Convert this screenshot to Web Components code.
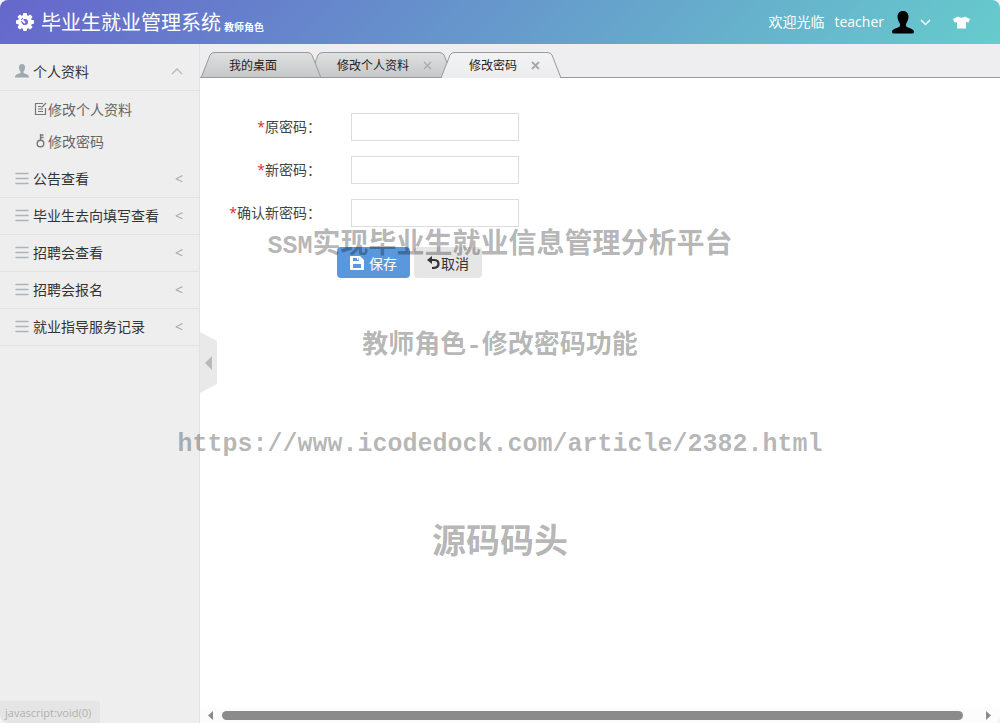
<!DOCTYPE html>
<html lang="zh-CN">
<head>
<meta charset="utf-8">
<meta name="viewport" content="width=device-width, initial-scale=1">
<title>毕业生就业管理系统</title>
<style>
  body { margin: 0; background: #f4f4f6; font-family: "Open Sans", "Noto Sans CJK SC", sans-serif; font-size: 14px; color: #333; }
</style>
</head>
<body>
<admin-app>
  <app-header slot="header" name="毕业生就业管理系统" role-name="教师角色" user="teacher"></app-header>
  <side-menu slot="side">
    <menu-group label="个人资料" icon="user" open>
      <menu-link icon="edit">修改个人资料</menu-link>
      <menu-link icon="key">修改密码</menu-link>
    </menu-group>
    <menu-group label="公告查看"></menu-group>
    <menu-group label="毕业生去向填写查看"></menu-group>
    <menu-group label="招聘会查看"></menu-group>
    <menu-group label="招聘会报名"></menu-group>
    <menu-group label="就业指导服务记录"></menu-group>
  </side-menu>
  <tab-strip>
    <page-tab fixed>我的桌面</page-tab>
    <page-tab>修改个人资料</page-tab>
    <page-tab active>修改密码</page-tab>
  </tab-strip>
  <password-form>
    <form-field label="原密码："></form-field>
    <form-field label="新密码："></form-field>
    <form-field label="确认新密码："></form-field>
  </password-form>
  <scroll-track></scroll-track>
  <status-tip slot="overlay">javascript:void(0)</status-tip>
  <water-mark slot="overlay"></water-mark>
</admin-app>

<script>
const define = (name, render) => customElements.define(name, class extends HTMLElement {
  connectedCallback() {
    if (this.shadowRoot) return;
    this.attachShadow({ mode: 'open' }).innerHTML = render(this);
  }
});

define('admin-app', () => `
  <style>
    :host { display: flex; flex-direction: column; position: relative; min-height: 100vh; border-radius: 8px; overflow: hidden; background: #fff; }
    .body { display: flex; flex: 1; }
    aside { width: 199px; flex: none; background: #eee; border-right: 1px solid #e2e2e2; }
    main { flex: 1; min-width: 0; display: flex; flex-direction: column; }
    .fold { position: absolute; left: 200px; top: 0; bottom: 0; margin: auto 0; width: 17px; height: 62px; padding: 0; border: 0; background: none; display: block; }
    .fold svg { display: block; }
  </style>
  <slot name="header"></slot>
  <div class="body">
    <aside><slot name="side"></slot></aside>
    <main><slot></slot></main>
  </div>
  <button class="fold" aria-label="收起菜单"><svg width="17" height="62"><path d="M0 1L17 10V53L0 62Z" fill="#e9e9e9"/><path d="M5 32L12 25V39Z" fill="#b9b9b9"/></svg></button>
  <slot name="overlay"></slot>`);

define('app-header', el => `
  <style>
    :host { display: flex; align-items: center; height: 44px; padding: 0 30px 0 15px; color: #fff; background: linear-gradient(135deg, #66c, #6cc); }
    h1 { display: flex; align-items: center; margin: 0; padding-top: 2px; font-size: 20px; font-weight: 400; line-height: 30px; }
    h1 svg { margin: 0 6px 2px 0; }
    small { font-size: 10px; font-weight: 700; line-height: 16px; margin: 8px 0 0 3px; }
    nav { display: flex; align-items: center; margin-left: auto; line-height: 20px; }
    nav span { margin-right: 10px; }
    button { display: flex; align-items: center; padding: 0; border: 0; background: none; color: inherit; font: inherit; }
    .user svg:first-of-type { margin: 0 6px 0 8px; }
    .skin { margin-left: 22px; }
  </style>
  <h1><svg width="20" height="20" viewBox="0 0 20 20"><g fill="#fff"><path fill-rule="evenodd" d="M10 3a7 7 0 1 1 0 14a7 7 0 0 1 0-14zM10 7a3 3 0 1 0 0 6a3 3 0 0 0 0-6z"/><g><rect x="8" y="1" width="4" height="4" rx="1"/><rect x="8" y="15" width="4" height="4" rx="1"/></g><g transform="rotate(45 10 10)"><rect x="8" y="1" width="4" height="4" rx="1"/><rect x="8" y="15" width="4" height="4" rx="1"/></g><g transform="rotate(90 10 10)"><rect x="8" y="1" width="4" height="4" rx="1"/><rect x="8" y="15" width="4" height="4" rx="1"/></g><g transform="rotate(135 10 10)"><rect x="8" y="1" width="4" height="4" rx="1"/><rect x="8" y="15" width="4" height="4" rx="1"/></g></g><path d="M6 7L10 11" stroke="#fff" stroke-width="2"/><path d="M6 9L9 13M8 6L6 8" stroke="#66c" stroke-width="1"/></svg>${el.getAttribute('name')}<small>${el.getAttribute('role-name')}</small></h1>
  <nav><span>欢迎光临</span>
    <button class="user">${el.getAttribute('user')}<svg width="22" height="24" viewBox="0 0 22 24"><path d="M11 1C14 1 16.500 3 16.500 6.500C16.500 10 15 12 14 14V16C15 18 21 18.500 22 21V22Q22 23.500 20 23.500H2Q0 23.500 0 22V21C1 18.500 7 18 8 16V14C7 12 5.500 10 5.500 6.500C5.500 3 8 1 11 1Z" fill="#000"/></svg><svg width="11" height="7" viewBox="0 0 11 7"><path d="M1 1L5.500 5.500L10 1" fill="none" stroke="#fff" stroke-width="1.500"/></svg></button>
    <button class="skin" aria-label="换肤"><svg width="17" height="13" viewBox="0 0 17 13"><path d="M5 .5Q8.500 3 12 .5L17 3L15.500 6.500L13 6V12.500H4V6L1.500 6.500L0 3Z" fill="#fff"/></svg></button>
  </nav>`);

define('side-menu', () => `
  <style>:host { display: block; padding-top: 10px; }</style>
  <slot></slot>`);

const groupIcons = {
  user: '<svg width="14" height="14" viewBox="0 0 14 14"><path d="M7 0C9 0 10 1.500 10 3.500C10 5.500 9.500 6.500 8.500 7.500V9C9.500 10 14 9.500 14 13.500H0C0 9.500 4.500 10 5.500 9V7.500C4.500 6.500 4 5.500 4 3.500C4 1.500 5 0 7 0Z" fill="#a0a8b0"/></svg>',
  list: '<svg width="14" height="14" viewBox="0 0 14 14"><path d="M1 2.500H13M1 7.500H13M1 12.500H13" stroke="#adb3ba" stroke-width="1.400" stroke-linecap="round"/></svg>'
};
define('menu-group', el => `
  <style>
    :host { display: block; }
    button { display: flex; align-items: center; box-sizing: border-box; width: 100%; height: 37px; padding: 0 16px 2px 15px; border: 0; border-bottom: 1px solid #e2e2e2; background: none; color: #333; font: inherit; text-align: left; }
    button svg:first-child { margin-right: 4px; }
    .mark { margin-left: auto; color: #a4a8a8; }
    .sub { padding: 2px 0 4px; }
  </style>
  <button aria-expanded="${el.hasAttribute('open')}">${groupIcons[el.getAttribute('icon') || 'list']}${el.getAttribute('label')}
    ${el.hasAttribute('open') ? '<svg class="mark" width="12" height="8" viewBox="0 0 12 8"><path d="M1 7L6 2L11 7" fill="none" stroke="#b9b9b9" stroke-width="1.300"/></svg>' : '<span class="mark">&lt;</span>'}
  </button>
  ${el.hasAttribute('open') ? '<div class="sub"><slot></slot></div>' : ''}`);

const linkIcons = {
  edit: '<path d="M9 1.500H1.500V12.500H11.500V6M4 4.500H7M4 7H9M4 9.500H9M7.500 5.500L12 1" fill="none" stroke="#777" stroke-width="1.200"/>',
  key: '<circle cx="6.500" cy="9.500" r="3.300" fill="none" stroke="#777" stroke-width="1.400"/><path d="M6.500 6.500V0M6.500 1H9.500M6.500 3.500H9.500" fill="none" stroke="#777" stroke-width="1.300"/>'
};
define('menu-link', el => `
  <style>
    :host { display: block; }
    a { display: flex; align-items: center; height: 32px; padding-left: 34px; color: #666; text-decoration: none; }
    svg { margin-right: 1px; }
  </style>
  <a href="#"><svg width="13" height="14" viewBox="0 0 13 14">${linkIcons[el.getAttribute('icon')]}</svg><slot></slot></a>`);

define('tab-strip', () => `
  <style>:host { display: flex; align-items: flex-end; box-sizing: border-box; height: 34px; padding-left: 1px; background: linear-gradient(#999, #999) bottom / 100% 1px no-repeat #eeeef0; isolation: isolate; }</style>
  <slot></slot>`);

define('page-tab', el => {
  const active = el.hasAttribute('active');
  const paint = active ? ['#f2f3f5', '#ececee'] : ['#dfe1e1', '#c6c7c8'];
  const edge = (name, fill, line) => `<svg class="${name}" width="14" height="26"><defs><linearGradient id="${name}" x2="0" y2="1"><stop stop-color="${paint[0]}"/><stop offset="1" stop-color="${paint[1]}"/></linearGradient></defs><path d="${fill}" fill="url(#${name})"/><path d="${line}" fill="none" stroke="#999"/></svg>`;
  return `
  <style>
    :host { display: flex; position: relative; z-index: ${active ? 2 : 0}; height: 26px; font-size: 12px; line-height: 25px; margin-right: -12px; }
    :host([fixed]) { z-index: 1; }
    svg { display: block; flex: none; }
    .label { display: flex; box-sizing: border-box; border-top: 1px solid #999; border-bottom: ${active ? '0' : '1px solid #999'}; padding-left: 14px; height: 26px; background: linear-gradient(${paint[0]}, ${paint[1]}); color: #222; white-space: nowrap; }
    .close { display: flex; align-items: center; box-sizing: border-box; width: 30px; height: 24px; padding: 1px 0 0 14px; border: 0; background: none; }
  </style>
  ${edge('left', 'M0 26L9 3Q10 0 14 0V26Z', 'M0 26L9 3Q10 .5 14 .5' + (active ? '' : 'M0 25.500H14'))}
  <span class="label"><slot></slot>${el.hasAttribute('fixed') ? '<span class="close"></span>' : `<button class="close" aria-label="关闭"><svg width="9" height="9"><path d="M1 1L8 8M8 1L1 8" stroke="${active ? '#a3a8ac' : '#a6aaad'}" stroke-width="${active ? 1.8 : 1.2}"/></svg></button>`}</span>
  ${edge('right', 'M14 26L5 3Q4 0 0 0V26Z', 'M14 26L5 3Q4 .5 0 .5' + (active ? '' : 'M0 25.500H14'))}`;
});

define('password-form', () => `
  <style>
    :host { display: block; flex: 1; padding-top: 35px; }
    .fields { display: grid; gap: 15px; }
    .actions { display: flex; gap: 4px; margin: 20px 0 0 137px; }
    button { display: flex; align-items: center; height: 31px; padding: 0 13px; border: 0; border-radius: 4px; font: inherit; }
    .save { gap: 5px; background: #5a98de; color: #fff; }
    .cancel { gap: 1px; background: #e6e6e6; color: #333; }
  </style>
  <form>
    <div class="fields"><slot></slot></div>
    <div class="actions">
      <button type="button" class="save"><svg width="14" height="14" viewBox="0 0 14 14"><path fill-rule="evenodd" d="M1 0H10L14 4V13Q14 14 13 14H1Q0 14 0 13V1Q0 0 1 0ZM3 2V5H9V2ZM3 8V12H11V8Z" fill="#fff"/><path d="M7 2H8.500V4H7Z" fill="#fff"/></svg>保存</button>
      <button type="button" class="cancel"><svg width="13" height="13" viewBox="0 0 13 13"><path d="M3 4H7Q11.500 4 11.500 8Q11.500 12 5 12" fill="none" stroke="#333" stroke-width="2.200"/><path d="M0 4L5 0V8Z" fill="#333"/></svg>取消</button>
    </div>
  </form>`);

define('form-field', el => `
  <style>
    :host { display: grid; grid-template-columns: 121px 168px; column-gap: 30px; align-items: center; }
    label { text-align: right; line-height: 28px; white-space: nowrap; color: #444; }
    b { font-weight: 400; color: #e02b2b; }
    input { box-sizing: border-box; width: 100%; height: 28px; padding: 0 8px; border: 1px solid #ddd; background: #fff; font: inherit; outline: 0; }
  </style>
  <label for="f"><b>*</b>${el.getAttribute('label')}</label><input id="f" type="password">`);

define('scroll-track', () => `
  <style>
    :host { display: flex; align-items: center; height: 15px; padding: 0 9px 0 8px; background: #fcfcfc; }
    i { flex: 1; height: 9px; margin: 0 23px 0 9px; border-radius: 5px; background: #8b8b8b; }
  </style>
  <svg width="5" height="9"><path d="M0 4.500L5 0V9Z" fill="#8b8b8b"/></svg><i></i><svg width="5" height="9"><path d="M5 4.500L0 0V9Z" fill="#8b8b8b"/></svg>`);

define('status-tip', () => `
  <style>:host { position: absolute; left: 0; bottom: 0; box-sizing: border-box; height: 22px; padding: 0 9px 0 5px; border-radius: 0 3px 0 0; background: #e5e5e5; color: #b0b0b0; font-size: 11px; line-height: 23px; }</style>
  <slot></slot>`);

define('water-mark', () => `
  <style>
    :host { position: absolute; inset: 0; display: flex; flex-direction: column; align-items: center; padding-top: 226px; font-family: "Liberation Mono", "Noto Sans CJK SC", monospace; font-weight: 700; line-height: 40px; white-space: nowrap; color: rgba(0, 0, 0, .3); pointer-events: none; }
    p { margin: 0 0 59px; }
    .title { font-size: 28px; }
    .page { font-size: 26px; }
    .link, .latin { font-size: 25px; }
    .brand { font-size: 34px; }
  </style>
  <p class="title"><span class="latin">SSM</span>实现毕业生就业信息管理分析平台</p>
  <p class="page">教师角色-修改密码功能</p>
  <p class="link">https://www.icodedock.com/article/2382.html</p>
  <p class="brand">源码码头</p>`);
</script>
</body>
</html>
